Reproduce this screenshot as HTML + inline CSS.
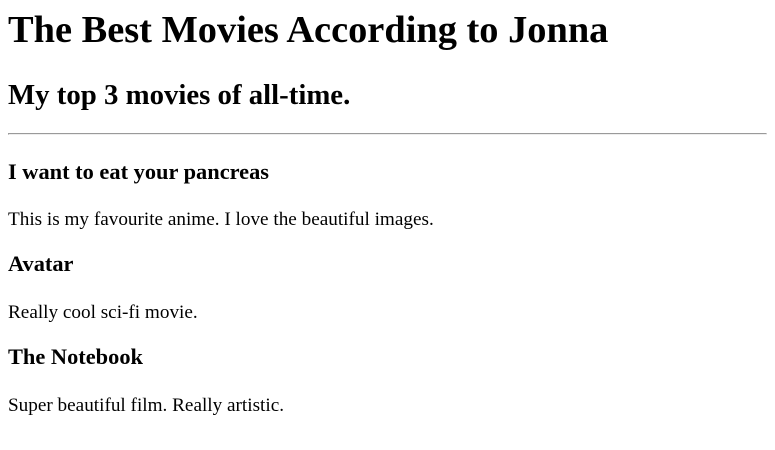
<!DOCTYPE html>
<html><head><meta charset="utf-8"><style>
body{font-family:"Liberation Serif",serif;margin:0 8px;background:#fff;color:#000;}
h1,h2,h3,p{margin:0;}
h1{font-size:38.4px;line-height:46px;margin-top:7px;}
h2{font-size:28.8px;line-height:34px;margin-top:25px;}
hr{margin:21px 0 0 0;}
h3{font-size:22.4px;line-height:26px;margin-top:20px;}
hr+h3{margin-top:24px;}
p{font-size:19.2px;line-height:22px;margin-top:24px;}
</style></head><body>
<h1>The Best Movies According to Jonna</h1>
<h2>My top 3 movies of all-time.</h2>
<hr>
<h3>I want to eat your pancreas</h3>
<p>This is my favourite anime. I love the beautiful images.</p>
<h3>Avatar</h3>
<p style="margin-top:25px">Really cool sci-fi movie.</p>
<h3>The Notebook</h3>
<p style="margin-top:25px">Super beautiful film. Really artistic.</p>
</body></html>
